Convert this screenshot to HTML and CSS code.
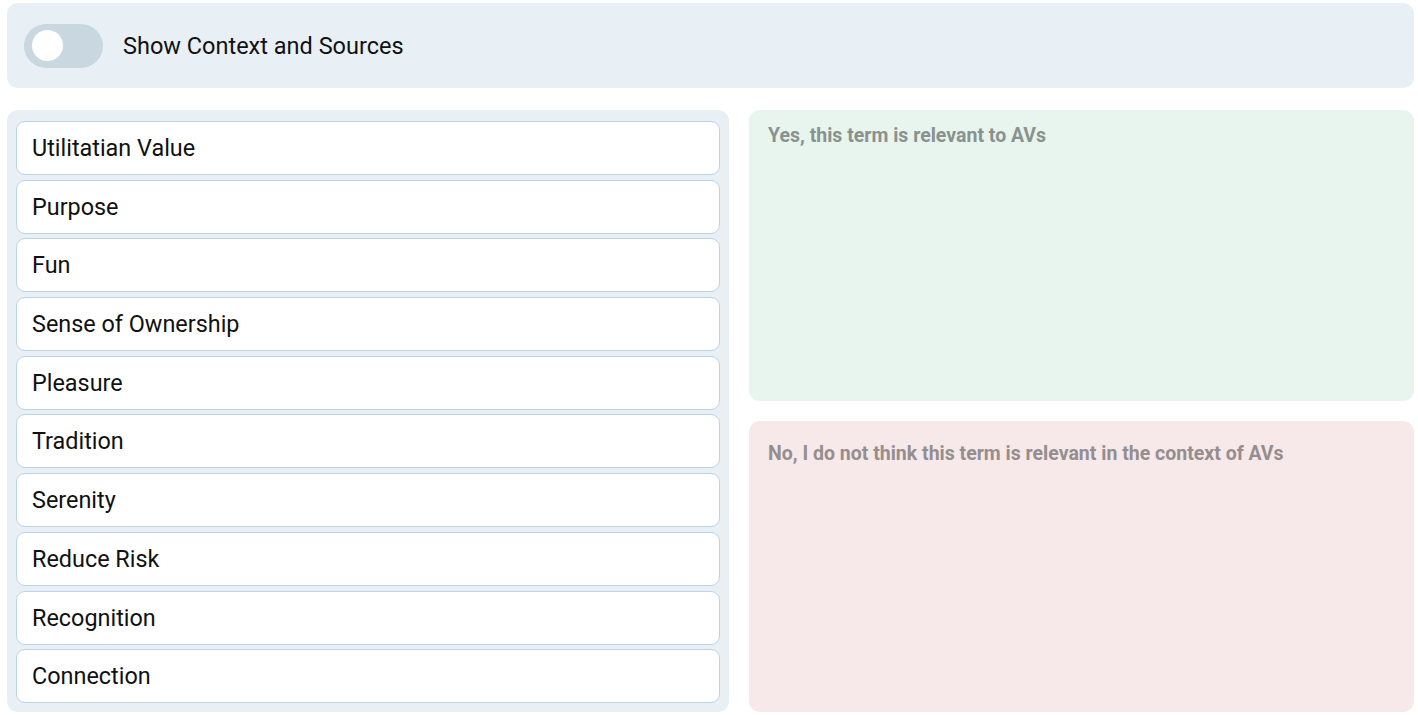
FILE: index.html
```html
<!DOCTYPE html>
<html>
<head>
<meta charset="utf-8">
<link rel="stylesheet" href="styles.css">
</head>
<body>
<div class="page">
  <div class="topbar">
    <div class="toggle"><div class="knob"></div></div>
    <span class="toggle-label">Show Context and Sources</span>
  </div>
  <div class="main">
    <div class="list">
      <div class="item">Utilitatian Value</div>
      <div class="item">Purpose</div>
      <div class="item">Fun</div>
      <div class="item">Sense of Ownership</div>
      <div class="item">Pleasure</div>
      <div class="item">Tradition</div>
      <div class="item">Serenity</div>
      <div class="item">Reduce Risk</div>
      <div class="item">Recognition</div>
      <div class="item">Connection</div>
    </div>
    <div class="zones">
      <div class="zone yes">Yes, this term is relevant to AVs</div>
      <div class="zone no">No, I do not think this term is relevant in the context of AVs</div>
    </div>
  </div>
</div>
</body>
</html>
```
FILE: styles.css
```css
html, body {
  margin: 0;
  padding: 0;
  background: #ffffff;
  font-family: Roboto, "Liberation Sans", sans-serif;
}
.page {
  padding: 3px 4px 0 7px;
  display: flex;
  flex-direction: column;
  gap: 22px;
}
.topbar {
  height: 85px;
  box-sizing: border-box;
  background: #e8f0f6;
  border-radius: 11px;
  display: flex;
  align-items: center;
  padding-left: 17px;
  gap: 20px;
}
.toggle {
  width: 79px;
  height: 44px;
  border-radius: 22px;
  background: #c9d7e0;
  display: flex;
  align-items: center;
  padding-left: 8px;
  box-sizing: border-box;
}
.knob {
  width: 31px;
  height: 31px;
  border-radius: 50%;
  background: #ffffff;
}
.toggle-label {
  font-size: 23.5px;
  color: #111111;
}
.main {
  display: grid;
  grid-template-columns: 722px 1fr;
  gap: 20px;
  height: 602px;
}
.list {
  background: #e8f0f6;
  border-radius: 11px;
  padding: 11px 9px 9px 9px;
  display: flex;
  flex-direction: column;
  gap: 4.7px;
}
.item {
  height: 54px;
  box-sizing: border-box;
  background: #ffffff;
  border: 1px solid #bdd4e7;
  border-radius: 9px;
  display: flex;
  align-items: center;
  padding-left: 15px;
  font-size: 23.4px;
  color: #111111;
}
.zones {
  display: grid;
  grid-template-rows: 1fr 1fr;
  gap: 20px;
}
.zone {
  border-radius: 11px;
  padding-left: 19px;
  font-size: 19.5px;
  line-height: 23px;
  font-weight: 700;
  box-sizing: border-box;
}
.yes {
  background: #e8f5ee;
  color: #8a928e;
  padding-top: 14px;
}
.no {
  background: #f7e8e9;
  color: #958e8f;
  padding-top: 21px;
}
```
